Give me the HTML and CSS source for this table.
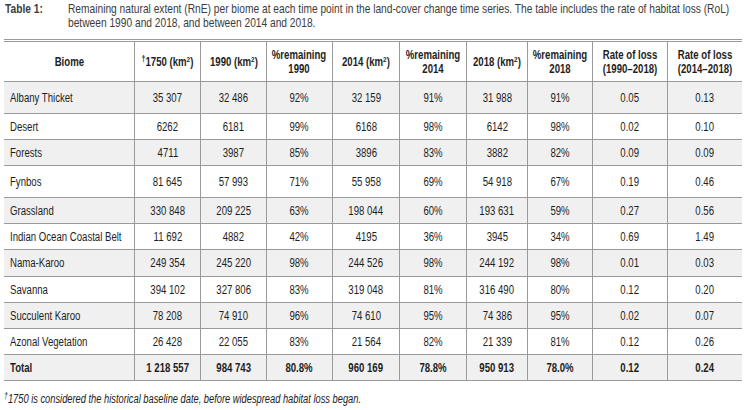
FILE: index.html
```html
<!DOCTYPE html>
<html lang="en">
<head>
<meta charset="utf-8">
<title>Table 1</title>
<link rel="stylesheet" href="styles.css">
</head>
<body>
<div class="caption">
  <div class="cap-label"><span class="n">Table 1:</span></div>
  <div class="cap-text"><span class="n">Remaining natural extent (RnE) per biome at each time point in the land-cover change time series. The table includes the rate of habitat loss (RoL)<br>between 1990 and 2018, and between 2014 and 2018.</span></div>
</div>
<table class="data">
  <colgroup>
    <col class="c1"><col class="c2"><col class="c3"><col class="c4"><col class="c5"><col class="c6"><col class="c7"><col class="c8"><col class="c9"><col class="c10">
  </colgroup>
  <thead>
    <tr class="head">
      <th><span class="t">Biome</span></th>
      <th><span class="t"><sup class="dag">†</sup>1750 (km<sup>2</sup>)</span></th>
      <th><span class="t">1990 (km<sup>2</sup>)</span></th>
      <th><span class="t">%remaining<br>1990</span></th>
      <th><span class="t">2014 (km<sup>2</sup>)</span></th>
      <th><span class="t">%remaining<br>2014</span></th>
      <th><span class="t">2018 (km<sup>2</sup>)</span></th>
      <th><span class="t">%remaining<br>2018</span></th>
      <th><span class="t">Rate of loss<br>(1990–2018)</span></th>
      <th><span class="t">Rate of loss<br>(2014–2018)</span></th>
    </tr>
  </thead>
  <tbody>
    <tr class="alt tall"><td><span class="t">Albany Thicket</span></td><td><span class="t">35 307</span></td><td><span class="t">32 486</span></td><td><span class="t">92%</span></td><td><span class="t">32 159</span></td><td><span class="t">91%</span></td><td><span class="t">31 988</span></td><td><span class="t">91%</span></td><td><span class="t">0.05</span></td><td><span class="t">0.13</span></td></tr>
    <tr><td><span class="t">Desert</span></td><td><span class="t">6262</span></td><td><span class="t">6181</span></td><td><span class="t">99%</span></td><td><span class="t">6168</span></td><td><span class="t">98%</span></td><td><span class="t">6142</span></td><td><span class="t">98%</span></td><td><span class="t">0.02</span></td><td><span class="t">0.10</span></td></tr>
    <tr class="alt"><td><span class="t">Forests</span></td><td><span class="t">4711</span></td><td><span class="t">3987</span></td><td><span class="t">85%</span></td><td><span class="t">3896</span></td><td><span class="t">83%</span></td><td><span class="t">3882</span></td><td><span class="t">82%</span></td><td><span class="t">0.09</span></td><td><span class="t">0.09</span></td></tr>
    <tr class="tall"><td><span class="t">Fynbos</span></td><td><span class="t">81 645</span></td><td><span class="t">57 993</span></td><td><span class="t">71%</span></td><td><span class="t">55 958</span></td><td><span class="t">69%</span></td><td><span class="t">54 918</span></td><td><span class="t">67%</span></td><td><span class="t">0.19</span></td><td><span class="t">0.46</span></td></tr>
    <tr class="alt"><td><span class="t">Grassland</span></td><td><span class="t">330 848</span></td><td><span class="t">209 225</span></td><td><span class="t">63%</span></td><td><span class="t">198 044</span></td><td><span class="t">60%</span></td><td><span class="t">193 631</span></td><td><span class="t">59%</span></td><td><span class="t">0.27</span></td><td><span class="t">0.56</span></td></tr>
    <tr><td><span class="t">Indian Ocean Coastal Belt</span></td><td><span class="t">11 692</span></td><td><span class="t">4882</span></td><td><span class="t">42%</span></td><td><span class="t">4195</span></td><td><span class="t">36%</span></td><td><span class="t">3945</span></td><td><span class="t">34%</span></td><td><span class="t">0.69</span></td><td><span class="t">1.49</span></td></tr>
    <tr class="alt mid"><td><span class="t">Nama-Karoo</span></td><td><span class="t">249 354</span></td><td><span class="t">245 220</span></td><td><span class="t">98%</span></td><td><span class="t">244 526</span></td><td><span class="t">98%</span></td><td><span class="t">244 192</span></td><td><span class="t">98%</span></td><td><span class="t">0.01</span></td><td><span class="t">0.03</span></td></tr>
    <tr><td><span class="t">Savanna</span></td><td><span class="t">394 102</span></td><td><span class="t">327 806</span></td><td><span class="t">83%</span></td><td><span class="t">319 048</span></td><td><span class="t">81%</span></td><td><span class="t">316 490</span></td><td><span class="t">80%</span></td><td><span class="t">0.12</span></td><td><span class="t">0.20</span></td></tr>
    <tr class="alt"><td><span class="t">Succulent Karoo</span></td><td><span class="t">78 208</span></td><td><span class="t">74 910</span></td><td><span class="t">96%</span></td><td><span class="t">74 610</span></td><td><span class="t">95%</span></td><td><span class="t">74 386</span></td><td><span class="t">95%</span></td><td><span class="t">0.02</span></td><td><span class="t">0.07</span></td></tr>
    <tr><td><span class="t">Azonal Vegetation</span></td><td><span class="t">26 428</span></td><td><span class="t">22 055</span></td><td><span class="t">83%</span></td><td><span class="t">21 564</span></td><td><span class="t">82%</span></td><td><span class="t">21 339</span></td><td><span class="t">81%</span></td><td><span class="t">0.12</span></td><td><span class="t">0.26</span></td></tr>
    <tr class="alt total"><td><span class="t">Total</span></td><td><span class="t">1 218 557</span></td><td><span class="t">984 743</span></td><td><span class="t">80.8%</span></td><td><span class="t">960 169</span></td><td><span class="t">78.8%</span></td><td><span class="t">950 913</span></td><td><span class="t">78.0%</span></td><td><span class="t">0.12</span></td><td><span class="t">0.24</span></td></tr>
  </tbody>
</table>
<p class="footnote"><span class="n"><sup class="dag">†</sup>1750 is considered the historical baseline date, before widespread habitat loss began.</span></p>
</body>
</html>
```
FILE: styles.css
```css
html, body {
  margin: 0;
  padding: 0;
  background: #ffffff;
}
body {
  font-family: "Liberation Sans", Arial, sans-serif;
  font-size: 12px;
  color: #1e1e1e;
}
/* condensed rendering of the narrow face */
.n {
  display: inline-block;
  transform: scaleX(0.8);
  transform-origin: left center;
  white-space: nowrap;
}
.caption {
  display: flex;
  padding: 2px 4px 0 5px;
  line-height: 14px;
  color: #3c3c3c;
  font-size: 13px;
}
.caption .n {
  transform: scaleX(0.785);
}
.cap-label {
  flex: 0 0 63px;
  font-weight: bold;
}
.cap-text {
  flex: 1 1 auto;
  min-width: 0;
}
.cap-text .n {
  margin-right: -200px;
}
.data {
  margin: 9px 0 0 4px;
  width: 738px;
  table-layout: fixed;
  border-collapse: separate;
  border-spacing: 0;
  border-top: 3px double #9a9a9a;
}
.c1 { width: 131px; }
.c2, .c3, .c4 { width: 66px; }
.c5, .c6 { width: 67px; }
.c7 { width: 61px; }
.c8 { width: 65px; }
.c9 { width: 75px; }
.c10 { width: 74px; }
.data th, .data td {
  padding: 0;
  text-align: center;
  vertical-align: middle;
  border-right: 1px solid #9a9a9a;
  border-bottom: 1px solid #9a9a9a;
  line-height: 14px;
  white-space: nowrap;
  overflow: visible;
}
.data th:last-child, .data td:last-child {
  border-right: none;
}
.t {
  display: inline-block;
  margin: 0 -12px;
  transform: scaleX(0.8);
  transform-origin: center center;
}
.data td:first-child {
  text-align: left;
  padding-left: 6px;
}
.data td:first-child .t {
  margin: 0 -40px 0 0;
  transform-origin: left center;
}
.data th {
  font-weight: bold;
}
.head { height: 40px; }
.data tbody tr { height: 26px; }
.data tbody tr.tall { height: 32px; }
.data tbody tr.mid { height: 27px; }
.alt td { background: #f0f0f0; }
.total td { font-weight: bold; }
sup {
  font-size: 8px;
  line-height: 0;
  vertical-align: 4px;
}
.dag { font-size: 9px; }
.footnote {
  margin: 11px 0 0 4px;
  font-style: italic;
  line-height: 14px;
  color: #222222;
}
.footnote .n {
  transform: scaleX(0.775);
}
```
